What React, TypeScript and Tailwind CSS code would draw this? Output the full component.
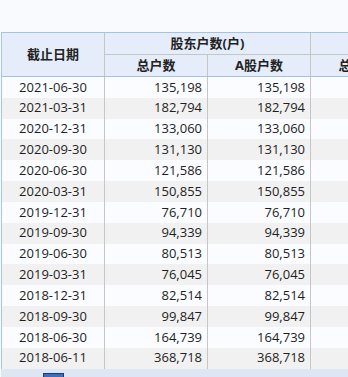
import React from "react";

const rows: [string, string][] = [
  ["2021-06-30", "135,198"],
  ["2021-03-31", "182,794"],
  ["2020-12-31", "133,060"],
  ["2020-09-30", "131,130"],
  ["2020-06-30", "121,586"],
  ["2020-03-31", "150,855"],
  ["2019-12-31", "76,710"],
  ["2019-09-30", "94,339"],
  ["2019-06-30", "80,513"],
  ["2019-03-31", "76,045"],
  ["2018-12-31", "82,514"],
  ["2018-09-30", "99,847"],
  ["2018-06-30", "164,739"],
  ["2018-06-11", "368,718"],
];

const font = {
  fontFamily: '"Open Sans", "Noto Sans CJK SC", sans-serif',
};

export default function App() {
  return (
    <div
      className="w-[348px] h-[377px] overflow-hidden bg-[#f8fafd] flex flex-col text-[#1e1e1e]"
      style={font}
    >
      <div className="h-[32px] shrink-0" />
      <div className="pl-[1px] flex-1 min-h-0 flex flex-col">
        <div className="w-[420px] border-l border-[#a8c6ec] flex flex-col">
          {/* header */}
          <div className="flex bg-[#e4edf9] border-t border-b border-[#a3c2ea] text-[13px] font-bold text-[#222]">
            <div className="w-[103px] h-[43px] border-r border-[#c6c6c6] flex items-center justify-center">
              截止日期
            </div>
            <div className="w-[206px] flex flex-col">
              <div className="h-[22px] border-b border-r border-[#c6c6c6] flex items-center justify-center">
                股东户数(户)
              </div>
              <div className="flex h-[21px]">
                <div className="w-[103px] border-r border-[#c6c6c6] flex items-center justify-center">
                  总户数
                </div>
                <div className="w-[103px] border-r border-[#c6c6c6] flex items-center justify-center">
                  A股户数
                </div>
              </div>
            </div>
            <div className="w-[94px] flex flex-col">
              <div className="h-[22px] border-b border-[#c6c6c6]" />
              <div className="h-[21px] flex items-center justify-center">
                总户数
              </div>
            </div>
          </div>
          {/* body */}
          <div className="flex flex-col text-[13px]">
            {rows.map(([d, n], i) => (
              <div
                key={d}
                className={`flex h-[20.83px] ${i % 2 === 0 ? "bg-[#fafcff]" : "bg-[#f1f1f1]"}`}
              >
                <div className="w-[103px] border-r border-[#c6c6c6] flex items-center justify-center">
                  {d}
                </div>
                <div className="w-[103px] border-r border-[#c6c6c6] flex items-center justify-end pr-[5px]">
                  {n}
                </div>
                <div className="w-[103px] border-r border-[#c6c6c6] flex items-center justify-end pr-[5px]">
                  {n}
                </div>
                <div className="w-[94px]" />
              </div>
            ))}
          </div>
        </div>
        <div className="flex-1 bg-[#dde7f4] relative">
          <div className="absolute left-[42px] top-[4px] w-[21px] h-[10px] bg-[#3e6fb6] border border-[#1d3a78]" />
        </div>
      </div>
    </div>
  );
}
